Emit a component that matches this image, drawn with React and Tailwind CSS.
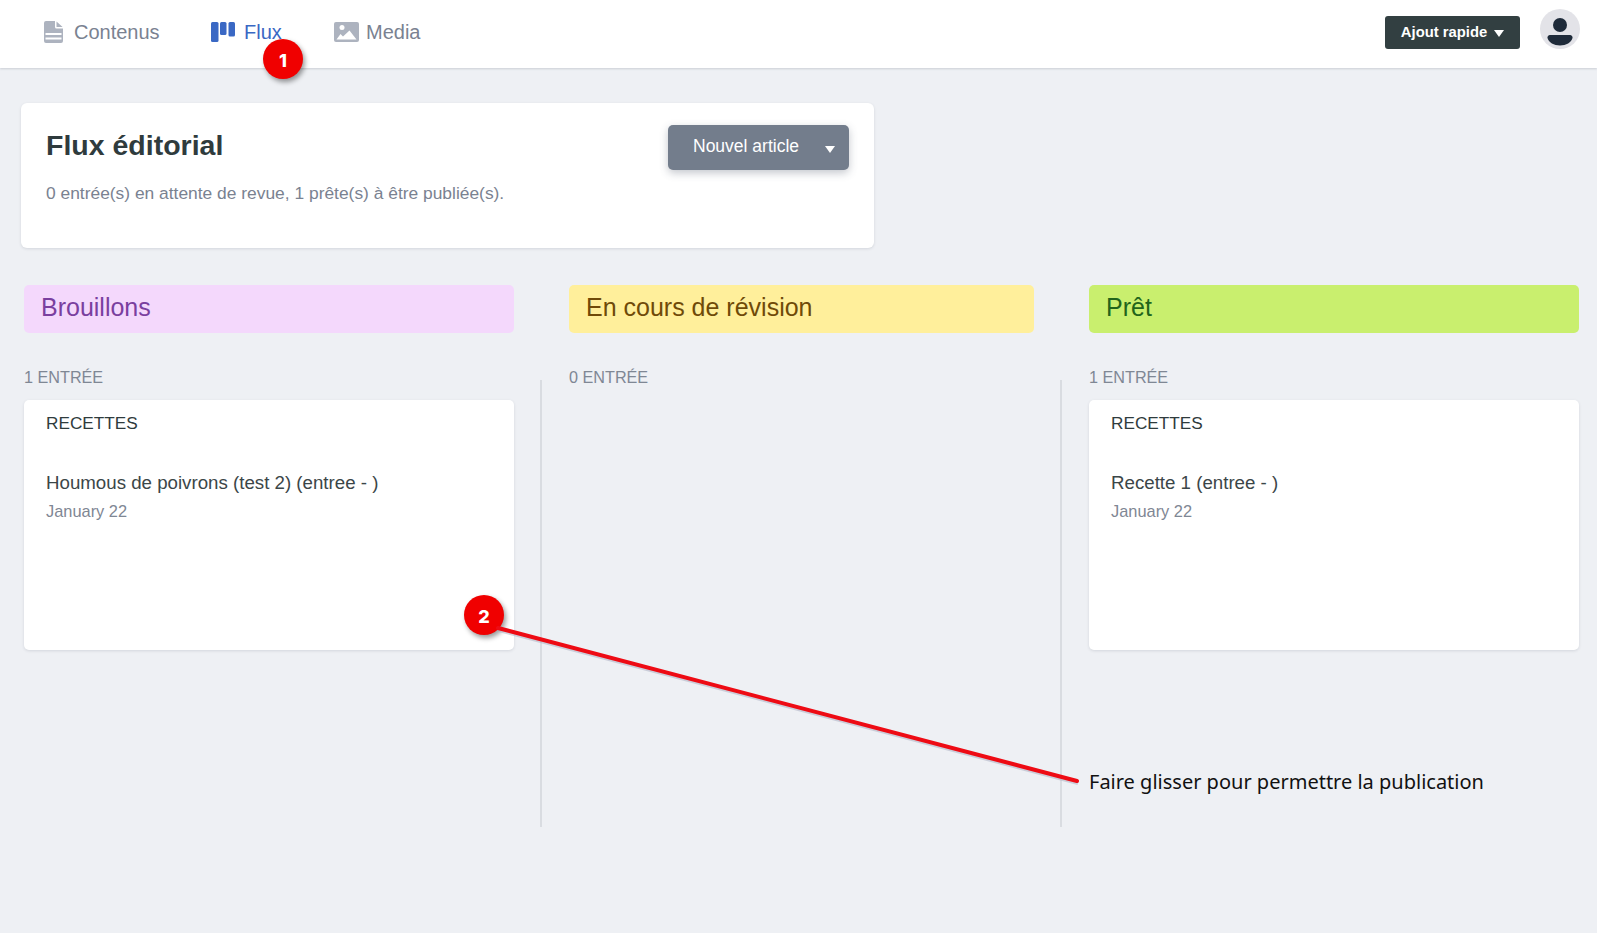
const FileIcon = () => (
  <svg width="19" height="22" viewBox="0 0 19 22" className="shrink-0">
    <path fill="#adb3bf" fillRule="evenodd" d="M2 0h9v6a1.500 1.500 0 0 0 1.500 1.500H19V20a2 2 0 0 1-2 2H2a2 2 0 0 1-2-2V2a2 2 0 0 1 2-2zM12.500.5 18.600 6H12.500zM1.500 12v2h16v-2zm0 4.500v2h16v-2z" />
  </svg>
);

const FluxIcon = () => (
  <svg width="24" height="20" viewBox="0 0 24 20" className="shrink-0">
    <rect x="0" y="0" width="7.500" height="20" rx="1.500" fill="#3a68c4" />
    <rect x="9" y="0" width="6.500" height="13" rx="1.500" fill="#3a68c4" />
    <rect x="17.500" y="0" width="6.500" height="14.500" rx="1.500" fill="#3a68c4" />
  </svg>
);

const ImageIcon = () => (
  <svg width="25" height="20" viewBox="0 0 25 20" className="shrink-0">
    <rect width="25" height="20" rx="2" fill="#adb3bf" />
    <circle cx="8" cy="5.500" r="2.500" fill="#fff" />
    <path fill="#fff" d="M2.500 17.500 6.500 12l2.500 2.500L15.500 8.500l7 9z" />
  </svg>
);

const Avatar = () => (
  <div className="w-10 h-10 rounded-full bg-[#e3e3e8] flex flex-col items-center justify-center pt-[6px]">
    <svg width="26" height="28" viewBox="0 0 26 28">
      <circle cx="13" cy="7" r="7" fill="#1f2b3a" />
      <path fill="#1f2b3a" d="M3 17h20a2.500 2.500 0 0 1 2.500 3c-1 4.500-6.500 7.500-12.500 7.500S1.500 24.500.5 20A2.500 2.500 0 0 1 3 17z" />
    </svg>
  </div>
);

const Caret = ({ className }) => (
  <span className={`inline-block w-0 h-0 border-l-[5.500px] border-r-[5.500px] border-t-[7px] border-l-transparent border-r-transparent border-t-white ${className}`} />
);

function NavItem({ icon, label, active, gap }) {
  return (
    <div className={`flex items-center ${gap} text-[20px] ${active ? 'text-[#3a68c4]' : 'text-[#7a8291]'}`}>
      {icon}
      <span>{label}</span>
    </div>
  );
}

function EntryCard({ title, date }) {
  return (
    <div className="h-[250px] bg-white rounded-[5px] shadow-[0_1px_3px_rgba(60,70,90,0.15)] pt-[12px] pl-[22px]">
      <p className="text-[17.200px] leading-[22px] text-[#2f3b3d]">RECETTES</p>
      <p className="mt-[38px] text-[18.700px] leading-[22px] text-[#3b4648]">{title}</p>
      <p className="mt-[7px] text-[16.400px] leading-[20px] text-[#7f8794]">{date}</p>
    </div>
  );
}

function Column({ width, title, headerClass, count, children }) {
  return (
    <div className={`${width} shrink-0`}>
      <div className={`h-12 rounded-[5px] pl-[17px] flex items-center pb-[2px] text-[25px] ${headerClass}`}>{title}</div>
      <p className="mt-[34px] text-[16.200px] leading-5 text-[#7f8794]">{count}</p>
      <div className="mt-[13px]">{children}</div>
    </div>
  );
}

const Divider = ({ className }) => <div className={`w-[2px] h-[447px] mt-[95px] shrink-0 bg-[#d9dce1] ${className}`} />;

const Badge = ({ className, children }) => (
  <div className={`absolute w-10 h-10 rounded-full bg-[#f00000] text-white font-extrabold text-[18px] pt-[2px] flex items-center justify-center shadow-[2px_3px_5px_rgba(0,0,0,0.4)] [font-family:Inter,sans-serif] ${className}`}>
    {children}
  </div>
);

export default function App() {
  return (
    <div className="relative w-[1597px] h-[933px] overflow-hidden bg-[#eef0f4] [font-family:'Liberation_Sans',Arial,sans-serif]">
      <header className="h-[68px] bg-white shadow-[0_1px_2px_rgba(60,70,90,0.2)] flex items-start justify-between pl-11 pr-[17px] pt-[9px]">
        <nav className="h-[46px] flex items-center">
          <div className="w-[167px]"><NavItem icon={<FileIcon />} label="Contenus" gap="gap-[11px]" /></div>
          <div className="w-[123px]"><NavItem icon={<FluxIcon />} label="Flux" gap="gap-[9px]" active /></div>
          <NavItem icon={<ImageIcon />} label="Media" gap="gap-[7px]" />
        </nav>
        <div className="flex items-start gap-5">
          <button className="w-[135px] h-[33px] mt-[7px] bg-[#323f41] rounded-[3px] text-white font-bold text-[14.800px] flex items-center justify-center gap-[7px]">
            Ajout rapide <Caret className="mt-[2px]" />
          </button>
          <Avatar />
        </div>
      </header>

      <main>
        <section className="w-[853px] h-[145px] ml-[21px] mt-[35px] bg-white rounded-[6px] shadow-[0_1px_3px_rgba(60,70,90,0.15)] pl-[25px] pr-[25px] pt-[22px] flex justify-between items-start">
          <div>
            <h1 className="text-[28.500px] leading-[40px] font-bold text-[#2f3b3d]">Flux éditorial</h1>
            <p className="mt-[17px] text-[17.400px] leading-[22px] text-[#7a8291]">0 entrée(s) en attente de revue, 1 prête(s) à être publiée(s).</p>
          </div>
          <button className="w-[181px] h-[45px] bg-[#737d8c] rounded-[5px] text-white text-[17.500px] flex items-center pl-[25px] pb-[2px] shadow-[0_3px_8px_rgba(60,70,90,0.3)]">
            Nouvel article <Caret className="ml-[26px] mt-[6px]" />
          </button>
        </section>

        <div className="flex items-start pl-6 mt-[37px]">
          <Column width="w-[490px]" title="Brouillons" headerClass="bg-[#f4d8fc] text-[#7a3f9f]" count="1 ENTRÉE">
            <EntryCard title="Houmous de poivrons (test 2) (entree - )" date="January 22" />
          </Column>
          <Divider className="ml-[26px] mr-[27px]" />
          <Column width="w-[465px]" title="En cours de révision" headerClass="bg-[#ffef9b] text-[#6f4a08]" count="0 ENTRÉE" />
          <Divider className="ml-[26px] mr-[27px]" />
          <Column width="w-[490px]" title="Prêt" headerClass="bg-[#c9ef6e] text-[#21641b]" count="1 ENTRÉE">
            <EntryCard title="Recette 1 (entree - )" date="January 22" />
          </Column>
        </div>
      </main>

      {/* annotations */}
      <Badge className="left-[263px] top-[39px]">1</Badge>
      <Badge className="left-[464px] top-[595px]">2</Badge>
      <svg className="absolute left-0 top-0 pointer-events-none" width="1597" height="933">
        <line x1="498" y1="628" x2="1077" y2="781" stroke="#a8acc0" strokeWidth="4" opacity="0.5" transform="translate(1 2)" />
        <line x1="498" y1="628" x2="1077" y2="781" stroke="#ee0b14" strokeWidth="4" strokeLinecap="round" />
      </svg>
      <p className="absolute left-[1089px] top-[768px] text-[20px] leading-7 text-[#111] [font-family:'Noto_Sans',sans-serif]">Faire glisser pour permettre la publication</p>
    </div>
  );
}
